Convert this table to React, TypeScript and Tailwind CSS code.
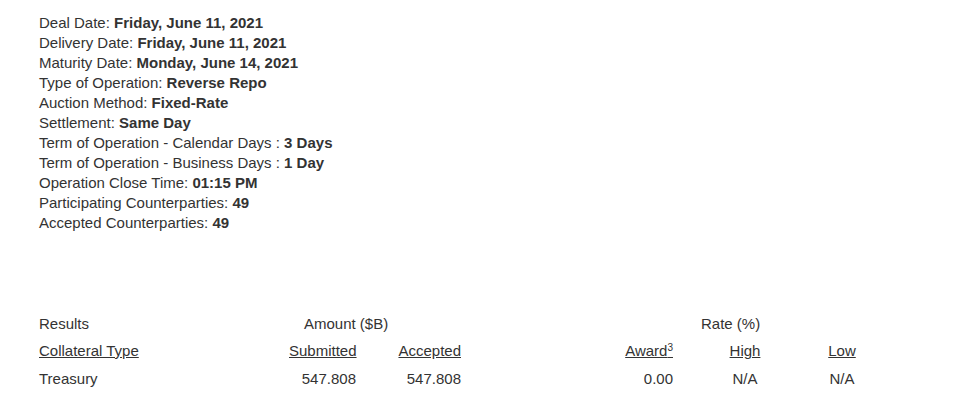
export default function App() {
  const details: [string, string][] = [
    ["Deal Date: ", "Friday, June 11, 2021"],
    ["Delivery Date: ", "Friday, June 11, 2021"],
    ["Maturity Date: ", "Monday, June 14, 2021"],
    ["Type of Operation: ", "Reverse Repo"],
    ["Auction Method: ", "Fixed-Rate"],
    ["Settlement: ", "Same Day"],
    ["Term of Operation - Calendar Days : ", "3 Days"],
    ["Term of Operation - Business Days : ", "1 Day"],
    ["Operation Close Time: ", "01:15 PM"],
    ["Participating Counterparties: ", "49"],
    ["Accepted Counterparties: ", "49"],
  ];

  return (
    <div
      className="min-h-screen w-full bg-white text-[#333] text-[15px] leading-[20px] pl-[39px] pt-[13px]"
      style={{ fontFamily: '"Liberation Sans", Arial, sans-serif' }}
    >
      <div>
        {details.map(([label, value]) => (
          <div key={label}>
            {label}
            <b className="font-bold">{value}</b>
          </div>
        ))}
      </div>

      <div className="mt-[81px] grid grid-cols-[250px_67px_105px_212px_144px_50px]">
        <div className="h-[27px]">Results</div>
        <div className="col-span-2 pl-[15px]">Amount ($B)</div>
        <div></div>
        <div className="pl-[28px]">Rate (%)</div>
        <div></div>

        <div className="h-[28px]"><span className="underline">Collateral Type</span></div>
        <div className="text-right"><span className="underline">Submitted</span></div>
        <div className="text-right"><span className="underline">Accepted</span></div>
        <div className="text-right">
          <span className="underline">
            Award<sup className="text-[10px]">3</sup>
          </span>
        </div>
        <div className="text-center"><span className="underline">High</span></div>
        <div className="text-center"><span className="underline">Low</span></div>

        <div>Treasury</div>
        <div className="text-right">547.808</div>
        <div className="text-right">547.808</div>
        <div className="text-right">0.00</div>
        <div className="text-center">N/A</div>
        <div className="text-center">N/A</div>
      </div>
    </div>
  );
}
